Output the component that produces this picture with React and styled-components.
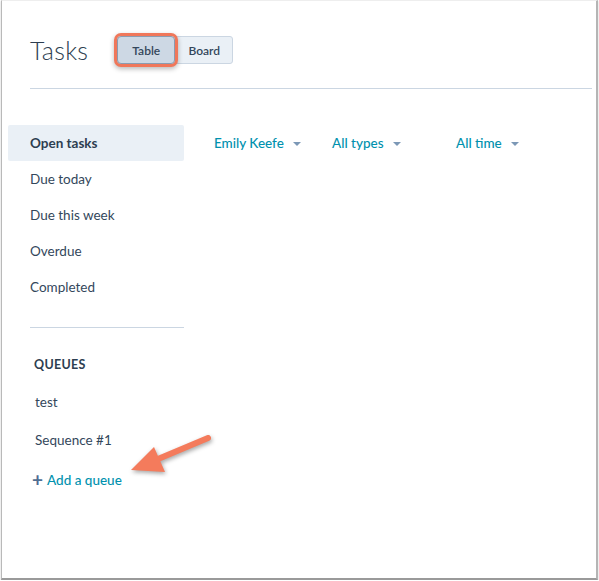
import React from 'react';
import styled, { createGlobalStyle } from 'styled-components';

const GlobalStyle = createGlobalStyle`
  html, body {
    margin: 0;
    padding: 0;
    background: #ffffff;
  }
  body {
    font-family: Lato, "Open Sans", sans-serif;
    color: #33475b;
  }
`;

const Frame = styled.div`
  position: relative;
  box-sizing: border-box;
  margin-left: 1px;
  width: 597px;
  height: 580px;
  border-left: 1px solid #b9b9b9;
  border-right: 2px solid #b5b5b5;
  border-top: 1px solid #eeeeee;
  border-bottom: 2px solid #9a9a9a;
  box-shadow: 0 1px 2px rgba(0, 0, 0, 0.2);
  background: #fff;
`;

const Header = styled.div`
  display: flex;
  align-items: center;
  gap: 29px;
  padding: 35px 0 0 28px;
  height: 28px;
`;

const Title = styled.h1`
  margin: 0;
  font-size: 25px;
  font-weight: 300;
  letter-spacing: 0.3px;
  color: #2d3e50;
`;

const Toggle = styled.div`
  display: flex;
  margin-top: 0;
`;

const ToggleButton = styled.div`
  box-sizing: border-box;
  width: ${p => p.$w}px;
  height: 28px;
  display: flex;
  align-items: center;
  justify-content: center;
  font-size: 12px;
  font-weight: 600;
  color: #33475b;
  background: ${p => (p.$active ? '#cdd8e4' : '#eaf0f6')};
  border: 1px solid #cbd6e2;
  border-radius: ${p => (p.$active ? '3px' : '0 3px 3px 0')};
  ${p =>
    p.$highlight &&
    `
    border-color: #8a9bb0;
    outline: 3px solid #f0775a;
    outline-offset: 0px;
    border-radius: 4px;
    box-shadow: 0 2px 5px 3px rgba(0, 0, 0, 0.28);
    position: relative;
    z-index: 1;
  `}
`;

const Divider = styled.hr`
  border: 0;
  border-top: 1px solid #cbd6e2;
  margin: 24px 4px 0 28px;
`;

const Body = styled.div`
  display: grid;
  grid-template-columns: 176px 1fr;
  padding: 36px 0 0 6px;
`;

const Sidebar = styled.div`
  display: flex;
  flex-direction: column;
`;

const NavItem = styled.div`
  height: 36px;
  display: flex;
  align-items: center;
  padding-left: 22px;
  font-size: 13.5px;
  font-weight: ${p => (p.$active ? 700 : 400)};
  color: ${p => (p.$active ? '#2d3e50' : '#33475b')};
  background: ${p => (p.$active ? '#eaf0f6' : 'transparent')};
  border-radius: 2px;
`;

const SideRule = styled.div`
  height: 1px;
  background: #cbd6e2;
  margin: 22px 0 0 22px;
`;

const QueueHeading = styled.div`
  margin: 29px 0 0 26px;
  font-size: 12.5px;
  font-weight: 700;
  color: #2d3e50;
  letter-spacing: 0.3px;
  line-height: 16px;
`;

const QueueItem = styled.div`
  margin: ${p => p.$top}px 0 0 27px;
  font-size: 13.5px;
  line-height: 16px;
  color: #33475b;
`;

const AddLink = styled.div`
  display: flex;
  align-items: center;
  gap: 4px;
  margin: 24px 0 0 24px;
  font-size: 13.5px;
  line-height: 16px;
  color: #0091ae;
  font-weight: 500;
`;

const Plus = styled.span`
  font-size: 19px;
  line-height: 16px;
  color: #506e91;
  font-weight: 700;
`;

const Filters = styled.div`
  display: flex;
  align-items: center;
  height: 36px;
  padding-left: 30px;
`;

const Filter = styled.div`
  display: flex;
  align-items: center;
  gap: 9px;
  width: ${p => p.$w}px;
  font-size: 13.5px;
  font-weight: 500;
  color: #0091ae;
`;

const Caret = styled.span`
  width: 0;
  height: 0;
  border-left: 4px solid transparent;
  border-right: 4px solid transparent;
  border-top: 4px solid #7c98b6;
  margin-top: 1px;
`;

const Arrow = styled.svg`
  position: absolute;
  left: 120px;
  top: 425px;
  overflow: visible;
  filter: drop-shadow(1px 2px 2px rgba(0, 0, 0, 0.35));
`;

const filters = [
  { label: 'Emily Keefe', w: 118 },
  { label: 'All types', w: 124 },
  { label: 'All time', w: 80 },
];

const navItems = ['Open tasks', 'Due today', 'Due this week', 'Overdue', 'Completed'];

export default function App() {
  return (
    <>
      <GlobalStyle />
      <Frame>
        <Header>
          <Title>Tasks</Title>
          <Toggle>
            <ToggleButton $w={58} $active $highlight>
              Table
            </ToggleButton>
            <ToggleButton $w={58}>Board</ToggleButton>
          </Toggle>
        </Header>
        <Divider />
        <Body>
          <Sidebar>
            {navItems.map((item, i) => (
              <NavItem key={item} $active={i === 0}>
                {item}
              </NavItem>
            ))}
            <SideRule />
            <QueueHeading>QUEUES</QueueHeading>
            <QueueItem $top={21}>test</QueueItem>
            <QueueItem $top={22}>Sequence #1</QueueItem>
            <AddLink>
              <Plus>+</Plus>
              Add a queue
            </AddLink>
          </Sidebar>
          <Filters>
            {filters.map(f => (
              <Filter key={f.label} $w={f.w}>
                {f.label}
                <Caret />
              </Filter>
            ))}
          </Filters>
        </Body>
        <Arrow width="90" height="55" viewBox="0 0 90 55">
          <line x1="86" y1="12" x2="36" y2="33" stroke="#f47b5c" strokeWidth="6" strokeLinecap="round" />
          <polygon points="9,44 32,21 43,46" fill="#f47b5c" />
        </Arrow>
      </Frame>
    </>
  );
}
